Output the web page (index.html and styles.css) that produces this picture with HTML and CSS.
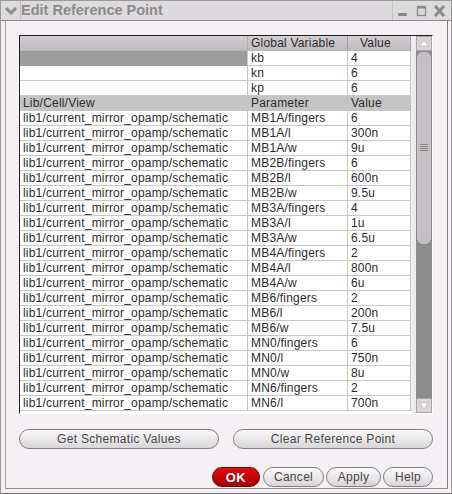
FILE: index.html
```html
<!DOCTYPE html>
<html>
<head>
<meta charset="utf-8">
<link rel="stylesheet" href="styles.css">
</head>
<body>
<div class="window">
  <div class="titlebar">
    <div class="tb-menu">
      <svg width="14" height="10" viewBox="0 0 14 10"><polyline points="2,2 7,7 12,2" fill="none" stroke="#8a8a8a" stroke-width="3" stroke-linejoin="miter"/></svg>
    </div>
    <div class="tb-title">Edit Reference Point</div>
    <div class="tb-buttons">
      <svg width="58" height="20" viewBox="0 0 58 20">
        <rect x="5" y="12" width="9" height="3" rx="1" fill="#8a8a8a"/>
        <rect x="24.5" y="5.5" width="8" height="9" fill="none" stroke="#8a8a8a" stroke-width="1.4"/>
        <rect x="24" y="5" width="9" height="2.5" fill="#8a8a8a"/>
        <path d="M43,6 L50,14 M50,6 L43,14" stroke="#8a8a8a" stroke-width="3" stroke-linecap="square"/>
      </svg>
    </div>
  </div>
  <div class="frame">
    <div class="tablebox">
      <div class="grid">
        <div class="row hdr">
          <div class="cell c1"></div>
          <div class="cell c2">Global Variable</div>
          <div class="cell c3">Value</div>
        </div>
        <div class="row">
          <div class="cell c1 sel"></div>
          <div class="cell c2">kb</div>
          <div class="cell c3">4</div>
        </div>
        <div class="row">
          <div class="cell c1"></div>
          <div class="cell c2">kn</div>
          <div class="cell c3">6</div>
        </div>
        <div class="row">
          <div class="cell c1"></div>
          <div class="cell c2">kp</div>
          <div class="cell c3">6</div>
        </div>
        <div class="row hdr2">
          <div class="cell c1">Lib/Cell/View</div>
          <div class="cell c2">Parameter</div>
          <div class="cell c3">Value</div>
        </div>
        <div class="row"><div class="cell c1">lib1/current_mirror_opamp/schematic</div><div class="cell c2">MB1A/fingers</div><div class="cell c3">6</div></div>
        <div class="row"><div class="cell c1">lib1/current_mirror_opamp/schematic</div><div class="cell c2">MB1A/l</div><div class="cell c3">300n</div></div>
        <div class="row"><div class="cell c1">lib1/current_mirror_opamp/schematic</div><div class="cell c2">MB1A/w</div><div class="cell c3">9u</div></div>
        <div class="row"><div class="cell c1">lib1/current_mirror_opamp/schematic</div><div class="cell c2">MB2B/fingers</div><div class="cell c3">6</div></div>
        <div class="row"><div class="cell c1">lib1/current_mirror_opamp/schematic</div><div class="cell c2">MB2B/l</div><div class="cell c3">600n</div></div>
        <div class="row"><div class="cell c1">lib1/current_mirror_opamp/schematic</div><div class="cell c2">MB2B/w</div><div class="cell c3">9.5u</div></div>
        <div class="row"><div class="cell c1">lib1/current_mirror_opamp/schematic</div><div class="cell c2">MB3A/fingers</div><div class="cell c3">4</div></div>
        <div class="row"><div class="cell c1">lib1/current_mirror_opamp/schematic</div><div class="cell c2">MB3A/l</div><div class="cell c3">1u</div></div>
        <div class="row"><div class="cell c1">lib1/current_mirror_opamp/schematic</div><div class="cell c2">MB3A/w</div><div class="cell c3">6.5u</div></div>
        <div class="row"><div class="cell c1">lib1/current_mirror_opamp/schematic</div><div class="cell c2">MB4A/fingers</div><div class="cell c3">2</div></div>
        <div class="row"><div class="cell c1">lib1/current_mirror_opamp/schematic</div><div class="cell c2">MB4A/l</div><div class="cell c3">800n</div></div>
        <div class="row"><div class="cell c1">lib1/current_mirror_opamp/schematic</div><div class="cell c2">MB4A/w</div><div class="cell c3">6u</div></div>
        <div class="row"><div class="cell c1">lib1/current_mirror_opamp/schematic</div><div class="cell c2">MB6/fingers</div><div class="cell c3">2</div></div>
        <div class="row"><div class="cell c1">lib1/current_mirror_opamp/schematic</div><div class="cell c2">MB6/l</div><div class="cell c3">200n</div></div>
        <div class="row"><div class="cell c1">lib1/current_mirror_opamp/schematic</div><div class="cell c2">MB6/w</div><div class="cell c3">7.5u</div></div>
        <div class="row"><div class="cell c1">lib1/current_mirror_opamp/schematic</div><div class="cell c2">MN0/fingers</div><div class="cell c3">6</div></div>
        <div class="row"><div class="cell c1">lib1/current_mirror_opamp/schematic</div><div class="cell c2">MN0/l</div><div class="cell c3">750n</div></div>
        <div class="row"><div class="cell c1">lib1/current_mirror_opamp/schematic</div><div class="cell c2">MN0/w</div><div class="cell c3">8u</div></div>
        <div class="row"><div class="cell c1">lib1/current_mirror_opamp/schematic</div><div class="cell c2">MN6/fingers</div><div class="cell c3">2</div></div>
        <div class="row"><div class="cell c1">lib1/current_mirror_opamp/schematic</div><div class="cell c2">MN6/l</div><div class="cell c3">700n</div></div>
      </div>
      <div class="gap"></div>
      <div class="scrollbar">
        <div class="sb-btn">
          <svg width="14" height="13" viewBox="0 0 14 13"><polygon points="7,3 11,9 3,9" fill="#ffffff" stroke="#b0b0b0" stroke-width="0.6"/></svg>
        </div>
        <div class="sb-thumb">
          <svg width="8" height="8" viewBox="0 0 8 8"><path d="M0,0.5H8M0,2.5H8M0,4.5H8M0,6.5H8" stroke="#8c8c8c" stroke-width="1"/></svg>
        </div>
        <div class="sb-trough"></div>
        <div class="sb-btn">
          <svg width="14" height="13" viewBox="0 0 14 13"><polygon points="3,4 11,4 7,10" fill="#ffffff" stroke="#b0b0b0" stroke-width="0.6"/></svg>
        </div>
      </div>
    </div>
    <div class="actions">
      <button class="btn wide">Get Schematic Values</button>
      <button class="btn wide">Clear Reference Point</button>
    </div>
    <div class="dialog-buttons">
      <button class="btn ok">OK</button>
      <button class="btn cancel">Cancel</button>
      <button class="btn apply">Apply</button>
      <button class="btn help">Help</button>
    </div>
  </div>
</div>
</body>
</html>
```

FILE: styles.css
```css
html, body {
  margin: 0;
  padding: 0;
  background: #f4f0f4;
}

.window {
  box-sizing: border-box;
  width: 452px;
  height: 494px;
  border: 1px solid #9a9a9a;
  border-bottom-color: #6c6c6c;
  background: #f4f0f4;
  display: flex;
  flex-direction: column;
  font-family: "Liberation Sans", Arial, sans-serif;
  font-size: 12px;
  letter-spacing: 0.2px;
  color: #2c2c2c;
}

.titlebar {
  box-sizing: border-box;
  height: 20px;
  display: flex;
  background: #dcdadc;
  border-bottom: 1px solid #8a8a8a;
}

.tb-menu {
  width: 19px;
  display: flex;
  align-items: center;
  justify-content: center;
  border-right: 1px solid #c4c2c4;
}

.tb-title {
  flex: 1;
  padding-left: 0;
  font-weight: bold;
  font-size: 14.5px;
  letter-spacing: 0;
  line-height: 19px;
  color: #8a8a8a;
}

.tb-buttons {
  width: 58px;
  border-left: 1px solid #c4c2c4;
  display: flex;
}

.frame {
  flex: 1;
  margin: 0 3px 4px 4px;
  border-left: 1px solid #a4a4a4;
  border-right: 1px solid #7c7c7c;
  border-bottom: 1px solid #8c8c8c;
  padding: 14px 13px 0 13px;
  display: flex;
  flex-direction: column;
}

.tablebox {
  display: flex;
  height: 379px;
  box-sizing: border-box;
  border-top: 1px solid #202020;
  border-left: 1px solid #202020;
  border-right: 1px solid #ffffff;
  border-bottom: 1px solid #ffffff;
  width: 414px;
}

.grid {
  width: 391px;
  height: 377px;
  overflow: hidden;
  background: #ffffff;
}

.row {
  display: flex;
  height: 15px;
}

.cell {
  box-sizing: border-box;
  height: 15px;
  border-right: 1px solid #c8c8c8;
  border-bottom: 1px solid #c8c8c8;
  padding-left: 3px;
  line-height: 14px;
  white-space: nowrap;
  overflow: hidden;
  background: #ffffff;
}

.c1 { width: 228px; }
.c2 { width: 100px; }
.c3 { width: 63px; }

.hdr .cell {
  background: linear-gradient(#d2ced2, #bfbbbf);
  border-right: 1px solid #a4a0a4;
  border-bottom: 1px solid #b8b4b8;
}

.hdr .c1 {
  border-right: 1px solid #b0acb0;
}

.hdr .c3 {
  padding-left: 12px;
}

.cell.sel {
  background: #9c9c9c;
  border-bottom-color: #9c9c9c;
  border-right-color: #c8c8c8;
}

.hdr2 .cell {
  background: #c4c4c4;
  border-right-color: #c4c4c4;
  border-bottom-color: #c8c8c8;
}

.gap {
  width: 5px;
  background: #eeeaee;
}

.scrollbar {
  width: 16px;
  display: flex;
  flex-direction: column;
  background: #8c8c8c;
}

.sb-btn {
  box-sizing: border-box;
  height: 15px;
  background: #d8d4d8;
  border: 1px solid #a8a4a8;
  display: flex;
  align-items: center;
  justify-content: center;
}

.sb-thumb {
  box-sizing: border-box;
  height: 194px;
  background: #c4c0c4;
  border: 1px solid #8a868a;
  border-radius: 7px;
  display: flex;
  align-items: center;
  justify-content: center;
}

.sb-trough {
  flex: 1;
  background: #8c8c8c;
}

.actions {
  display: flex;
  gap: 14px;
  margin-top: 15px;
}

.btn {
  box-sizing: border-box;
  height: 20px;
  border: 1px solid #828082;
  border-radius: 10px;
  background: linear-gradient(#fafafa, #e6e4e6 60%, #d6d4d6);
  font-family: "Liberation Sans", Arial, sans-serif;
  font-size: 12px;
  letter-spacing: 0.3px;
  color: #484848;
  padding: 0;
  margin: 0;
  line-height: 17px;
}

.wide {
  width: 200px;
}

.dialog-buttons {
  display: flex;
  justify-content: flex-end;
  gap: 2px;
  margin-top: 18px;
  padding-right: 1px;
}

.ok {
  width: 48px;
  margin-right: 1px;
  background: linear-gradient(#e01010, #c00000 60%, #a00000);
  border-color: #6a0000;
  color: #ffffff;
  font-weight: bold;
  font-size: 13px;
  letter-spacing: 0.5px;
}

.cancel { width: 61px; }
.apply { width: 55px; }
.help { width: 50px; }
```
